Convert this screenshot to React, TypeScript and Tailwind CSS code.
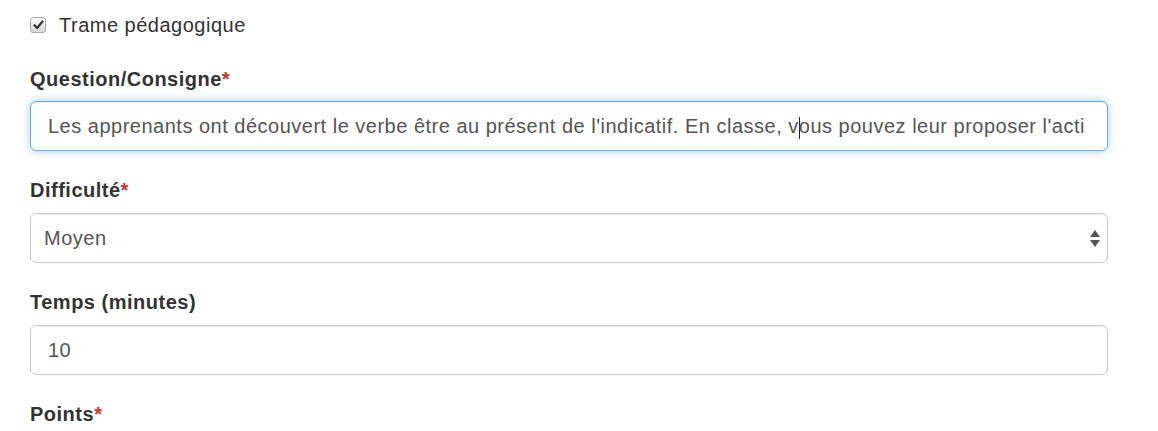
const fieldText = "Les apprenants ont découvert le verbe être au présent de l'indicatif. En classe, v";
const fieldRest = "ous pouvez leur proposer l'acti";

function Label({ text, required }: { text: string; required?: boolean }) {
  return (
    <div className="h-7 leading-7 font-bold text-[#333]">
      {text}
      {required && <span className="text-[#c9302c]">*</span>}
    </div>
  );
}

export default function App() {
  return (
    <div
      className="w-[1158px] h-[431px] overflow-hidden bg-white pl-[30px] pr-[50px] pt-[11px] text-[20px] tracking-[0.5px]"
      style={{ fontFamily: '"Liberation Sans", Arial, sans-serif' }}
    >
      {/* checkbox row */}
      <div className="flex items-center h-7 text-[#333]">
        <div className="w-[16px] h-[16px] rounded-[3px] border border-[#a9a9a9] bg-gradient-to-b from-[#fcfcfc] to-[#d6d6d6] flex items-center justify-center">
          <svg width="11" height="10" viewBox="0 0 11 10">
            <path d="M1.5 5.2 L4.2 8 L9.5 1.5" fill="none" stroke="#333" strokeWidth="2.2" strokeLinecap="round" strokeLinejoin="round" />
          </svg>
        </div>
        <span className="ml-[13px]">Trame pédagogique</span>
      </div>

      <div className="mt-[26px]">
        <Label text="Question/Consigne" required />
      </div>
      <div className="mt-[8px] h-[50px] rounded-[6px] border border-[#66afe9] bg-white px-[17px] flex items-center shadow-[inset_0_1px_1px_rgba(0,0,0,0.075),0_0_8px_rgba(102,175,233,0.6)]">
        <div className="overflow-hidden whitespace-nowrap text-[#555] flex-1">
          {fieldText}
          <span className="inline-block w-px h-[22px] bg-[#222] align-middle -mr-px" />
          {fieldRest}
        </div>
      </div>

      <div className="mt-[25px]">
        <Label text="Difficulté" required />
      </div>
      <div className="mt-[9px] h-[50px] rounded-[6px] border border-[#ccc] bg-white pl-[13px] pr-[7px] flex items-center justify-between text-[#555] shadow-[inset_0_1px_1px_rgba(0,0,0,0.075)]">
        <span>Moyen</span>
        <svg width="10" height="17" viewBox="0 0 10 17">
          <path d="M5 0 L10 7 L0 7 Z" fill="#555" />
          <path d="M0 10 L10 10 L5 17 Z" fill="#555" />
        </svg>
      </div>

      <div className="mt-[25px]">
        <Label text="Temps (minutes)" />
      </div>
      <div className="mt-[9px] h-[50px] rounded-[6px] border border-[#ccc] bg-white px-[17px] flex items-center text-[#555] shadow-[inset_0_1px_1px_rgba(0,0,0,0.075)]">
        10
      </div>

      <div className="mt-[25px]">
        <Label text="Points" required />
      </div>
    </div>
  );
}
